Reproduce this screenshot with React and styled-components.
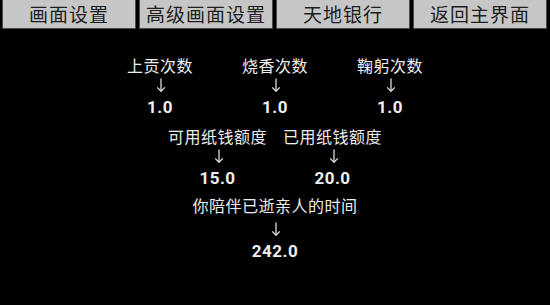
import React from "react";
import styled, { createGlobalStyle } from "styled-components";

const GlobalStyle = createGlobalStyle`
  html, body {
    margin: 0;
    padding: 0;
    background: #000;
  }
  body {
    width: 550px;
    height: 305px;
    overflow: hidden;
    font-family: "Noto Sans CJK SC", "Noto Sans", sans-serif;
  }
`;

const tabs = ["画面设置", "高级画面设置", "天地银行", "返回主界面"];

// top = space above the row, drop = space between label and arrow
const rows = [
  {
    top: 0,
    drop: 3,
    stats: [
      { label: "上贡次数", value: "1.0" },
      { label: "烧香次数", value: "1.0" },
      { label: "鞠躬次数", value: "1.0" },
    ],
  },
  {
    top: 7,
    drop: 3,
    stats: [
      { label: "可用纸钱额度", value: "15.0" },
      { label: "已用纸钱额度", value: "20.0" },
    ],
  },
  {
    top: 5,
    drop: 7,
    stats: [{ label: "你陪伴已逝亲人的时间", value: "242.0" }],
  },
];

const DownArrow = ({ drop }) => (
  <ArrowIcon $drop={drop} width="10" height="14" viewBox="0 0 10 14">
    <path d="M5 0.5V13.2" stroke="currentColor" strokeWidth="1.3" fill="none" />
    <path
      d="M1.2 9.4L5 13.3L8.8 9.4"
      stroke="currentColor"
      strokeWidth="1.3"
      fill="none"
    />
  </ArrowIcon>
);

const App = () => {
  return (
    <Page>
      <GlobalStyle />
      <Toolbar>
        {tabs.map((t) => (
          <TabButton key={t}>{t}</TabButton>
        ))}
      </Toolbar>
      <Stats>
        {rows.map((row, idx) => (
          <StatRow key={idx} $top={row.top}>
            {row.stats.map((s) => (
              <Stat key={s.label}>
                <Label>{s.label}</Label>
                <DownArrow drop={row.drop} />
                <Value>{s.value}</Value>
              </Stat>
            ))}
          </StatRow>
        ))}
      </Stats>
    </Page>
  );
};

export default App;

const Page = styled.div`
  width: 550px;
  height: 305px;
  background: #000;
  color: #eee;
`;

const Toolbar = styled.div`
  display: flex;
  gap: 3px;
  padding: 0 3px 0 2px;
  height: 29px;
`;

const TabButton = styled.button`
  flex: 1;
  height: 29px;
  margin: 0;
  padding: 0 0 1px;
  background: #c6c6c6;
  border: 1px solid #4a4a4a;
  border-top: none;
  color: #1e1e1e;
  font-family: "Noto Sans CJK SC", "Noto Sans", sans-serif;
  font-size: 19px;
  letter-spacing: 1px;
  line-height: 28px;
`;

const Stats = styled.div`
  display: flex;
  flex-direction: column;
  align-items: center;
  padding-top: 26px;
`;

const StatRow = styled.div`
  display: flex;
  justify-content: center;
  margin-top: ${(p) => p.$top}px;
`;

const Stat = styled.div`
  width: 115px;
  display: flex;
  flex-direction: column;
  align-items: center;
  white-space: nowrap;
`;

const Label = styled.div`
  font-size: 16px;
  line-height: 20px;
  letter-spacing: 0.5px;
`;

const ArrowIcon = styled.svg`
  display: block;
  margin: ${(p) => p.$drop}px 0 3px 2px;
  color: #ddd;
`;

const Value = styled.div`
  font-family: "Roboto", "Noto Sans", sans-serif;
  font-size: 17px;
  font-weight: bold;
  line-height: 24px;
  letter-spacing: 0.5px;
`;
